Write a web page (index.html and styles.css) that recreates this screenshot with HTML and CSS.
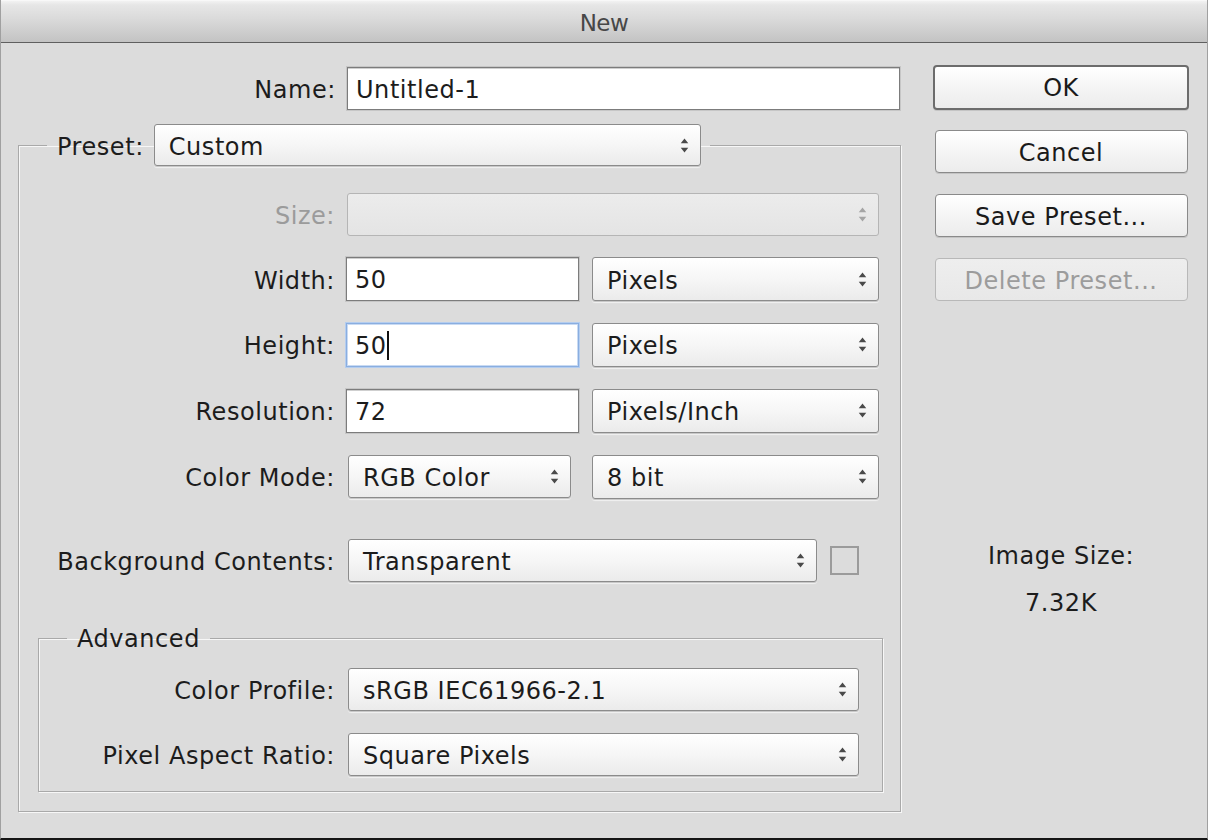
FILE: index.html
```html
<!DOCTYPE html>
<html>
<head>
<meta charset="utf-8">
<title>New</title>
<link rel="stylesheet" href="styles.css">
</head>
<body>
<div class="window">
  <div class="titlebar">New</div>
  <div class="content">
    <div class="left">
      <div class="row name-row">
        <label class="lbl lbl-main">Name:</label>
        <div class="input w-name">Untitled-1</div>
      </div>

      <fieldset class="group main-group">
        <legend class="legend-main">
          <span class="lbl">Preset:</span>
          <div class="select w-preset"><span>Custom</span><svg class="arr" viewBox="0 0 8 14"><path d="M4 0.5 L7.5 5 L0.5 5 Z M0.5 9 L7.5 9 L4 13.5 Z"/></svg></div>
        </legend>

        <div class="row r-size">
          <label class="lbl lbl-main disabled">Size:</label>
          <div class="select select-disabled w-size"><span></span><svg class="arr" viewBox="0 0 8 14"><path d="M4 0.5 L7.5 5 L0.5 5 Z M0.5 9 L7.5 9 L4 13.5 Z"/></svg></div>
        </div>

        <div class="row r-width">
          <label class="lbl lbl-main">Width:</label>
          <div class="input w-num">50</div>
          <div class="select w-unit"><span>Pixels</span><svg class="arr" viewBox="0 0 8 14"><path d="M4 0.5 L7.5 5 L0.5 5 Z M0.5 9 L7.5 9 L4 13.5 Z"/></svg></div>
        </div>

        <div class="row r-height">
          <label class="lbl lbl-main">Height:</label>
          <div class="input w-num focused">50<span class="caret"></span></div>
          <div class="select w-unit"><span>Pixels</span><svg class="arr" viewBox="0 0 8 14"><path d="M4 0.5 L7.5 5 L0.5 5 Z M0.5 9 L7.5 9 L4 13.5 Z"/></svg></div>
        </div>

        <div class="row r-res">
          <label class="lbl lbl-main">Resolution:</label>
          <div class="input w-num">72</div>
          <div class="select w-unit"><span>Pixels/Inch</span><svg class="arr" viewBox="0 0 8 14"><path d="M4 0.5 L7.5 5 L0.5 5 Z M0.5 9 L7.5 9 L4 13.5 Z"/></svg></div>
        </div>

        <div class="row r-mode">
          <label class="lbl lbl-main">Color Mode:</label>
          <div class="select sel-gap w-mode"><span>RGB Color</span><svg class="arr" viewBox="0 0 8 14"><path d="M4 0.5 L7.5 5 L0.5 5 Z M0.5 9 L7.5 9 L4 13.5 Z"/></svg></div>
          <div class="select w-unit"><span>8 bit</span><svg class="arr" viewBox="0 0 8 14"><path d="M4 0.5 L7.5 5 L0.5 5 Z M0.5 9 L7.5 9 L4 13.5 Z"/></svg></div>
        </div>

        <div class="row r-bg">
          <label class="lbl lbl-main">Background Contents:</label>
          <div class="select sel-gap w-bg"><span>Transparent</span><svg class="arr" viewBox="0 0 8 14"><path d="M4 0.5 L7.5 5 L0.5 5 Z M0.5 9 L7.5 9 L4 13.5 Z"/></svg></div>
          <div class="swatch"></div>
        </div>

        <fieldset class="group adv-group">
          <legend class="legend-adv">Advanced</legend>
          <div class="row r-profile">
            <label class="lbl lbl-adv">Color Profile:</label>
            <div class="select sel-gap w-adv"><span>sRGB IEC61966-2.1</span><svg class="arr" viewBox="0 0 8 14"><path d="M4 0.5 L7.5 5 L0.5 5 Z M0.5 9 L7.5 9 L4 13.5 Z"/></svg></div>
          </div>
          <div class="row r-par">
            <label class="lbl lbl-adv">Pixel Aspect Ratio:</label>
            <div class="select sel-gap w-adv"><span>Square Pixels</span><svg class="arr" viewBox="0 0 8 14"><path d="M4 0.5 L7.5 5 L0.5 5 Z M0.5 9 L7.5 9 L4 13.5 Z"/></svg></div>
          </div>
        </fieldset>
      </fieldset>
    </div>

    <div class="right">
      <div class="btn btn-default">OK</div>
      <div class="btn">Cancel</div>
      <div class="btn">Save Preset...</div>
      <div class="btn btn-disabled">Delete Preset...</div>
      <div class="imgsize">
        <div class="imgsize-label">Image Size:</div>
        <div class="imgsize-value">7.32K</div>
      </div>
    </div>
  </div>
</div>
</body>
</html>
```

FILE: styles.css
```css
* { box-sizing: border-box; }

html, body {
  margin: 0;
  padding: 0;
  background: #dcdcdc;
}

body {
  font-family: "DejaVu Sans", "Liberation Sans", sans-serif;
  font-size: 24px;
  letter-spacing: 0.55px;
  color: #1c1c1c;
}

.window {
  width: 1208px;
  height: 840px;
  background: #dcdcdc;
  border-left: 1px solid #a0a0a0;
  border-right: 1px solid #a0a0a0;
  border-bottom: 2px solid #151515;
  display: flex;
  flex-direction: column;
  overflow: hidden;
}

.titlebar {
  height: 43px;
  flex: none;
  text-align: center;
  line-height: 44px;
  color: #474747;
  font-size: 23px;
  letter-spacing: -0.5px;
  background: linear-gradient(#f2f2f2 0px, #e6e6e6 4px, #d8d8d8 20px, #c2c2c2 42px);
  border-top: 1px solid #f8f8f8;
  border-bottom: 1px solid #5f5f5f;
}

.content {
  display: flex;
  flex: 1;
}

.left {
  width: 930px;
  padding-left: 17px;
  flex: none;
}

.row {
  display: flex;
  align-items: center;
}

.lbl {
  white-space: nowrap;
  flex: none;
  padding-top: 3px;
}

.lbl-main {
  width: 316px;
  text-align: right;
  margin-right: 11px;
}

.lbl-adv {
  width: 296px;
  text-align: right;
  margin-right: 11px;
}

.disabled { color: #9b9b9b; }

.name-row {
  margin-top: 24px;
  height: 43px;
}

.name-row .lbl-main {
  width: 318px;
}

.input {
  height: 44px;
  background: #fff;
  border: 1px solid #7c7c7c;
  box-shadow: 0 0 0 1px #c6c6c6, inset 0 1px 0 #cfcfcf;
  padding: 3px 0 0 8px;
  line-height: 39px;
  white-space: nowrap;
  flex: none;
}

.input.focused {
  border: 1px solid #8aaee0;
  box-shadow: 0 0 0 1px #b4cdef, inset 0 0 0 1px #c8daf3;
}

.caret {
  display: inline-block;
  width: 2px;
  height: 29px;
  background: #111;
  vertical-align: -6px;
  margin-left: 0;
}

.w-name { width: 553px; height: 43px; }
.w-num { width: 233px; margin-right: 13px; }

.select {
  height: 43px;
  background: linear-gradient(#ffffff, #f6f6f6 50%, #ebebeb);
  border: 1px solid #8b8b8b;
  border-radius: 3px;
  box-shadow: 0 1px 0 #c8c8c8, 0 2px 1px rgba(255,255,255,0.6);
  display: flex;
  align-items: center;
  justify-content: space-between;
  padding: 0 11px 0 14px;
  white-space: nowrap;
  flex: none;
}

.select span {
  padding-top: 3px;
}

.select .arr {
  width: 9px;
  height: 15px;
  fill: #4a4a4a;
}

.select-disabled {
  border-color: #b5b5b5;
  background: linear-gradient(#ececec, #e4e4e4);
  box-shadow: none;
}

.select-disabled .arr { fill: #a5a5a5; }

.sel-gap { margin-left: 2px; }

.w-preset { width: 547px; height: 42px; }
.w-size { width: 532px; margin-left: 1px; }
.w-unit { width: 287px; height: 44px; }
.w-mode { width: 223px; margin-right: 21px; }
.w-bg { width: 469px; margin-right: 13px; }
.w-adv { width: 511px; }

.swatch {
  width: 29px;
  height: 29px;
  border: 2px solid #9b9b9b;
  background: #dcdcdc;
}

.group {
  margin: 0;
  padding: 0;
  min-width: 0;
  border: 1px solid #a9a9a9;
  box-shadow: inset 1px 1px 0 #f7f7f7, 1px 1px 0 #f7f7f7;
}

.main-group {
  width: 883px;
  margin-top: 14px;
  padding-bottom: 19px;
}

.legend-main {
  margin-left: 28px;
  padding: 0 9px 0 10px;
  display: flex;
  align-items: center;
  height: 42px;
}

.legend-main .lbl {
  margin-right: 10px;
}

.r-size { margin-top: 27px; height: 43px; }
.r-width { margin-top: 21px; height: 44px; }
.r-height { margin-top: 21px; height: 45px; }
.r-res { margin-top: 21px; height: 45px; }
.r-mode { margin-top: 22px; height: 43px; }
.r-bg { margin-top: 41px; height: 43px; }

.adv-group {
  width: 845px;
  margin-left: 19px;
  margin-top: 40px;
  padding-bottom: 15px;
}

.legend-adv {
  margin-left: 28px;
  padding: 2px 10px 0;
  line-height: 30px;
}

.r-profile { margin-top: 14px; height: 43px; }
.r-par { margin-top: 22px; height: 43px; }

.right {
  flex: none;
  width: 256px;
  margin-left: 2px;
  padding-top: 22px;
  display: flex;
  flex-direction: column;
  align-items: center;
}

.btn {
  width: 253px;
  height: 43px;
  margin-top: 21px;
  border: 1px solid #8a8a8a;
  border-radius: 4px;
  background: linear-gradient(#ffffff, #f3f3f3 60%, #ececec);
  box-shadow: 0 1px 0 #c4c4c4;
  text-align: center;
  line-height: 41px;
  padding-top: 2px;
  color: #1a1a1a;
}

.btn-default {
  width: 256px;
  height: 45px;
  margin-top: 0;
  border: 2px solid #6c6c6c;
  line-height: 39px;
  padding-top: 2px;
  margin-bottom: -1px;
}

.btn-disabled {
  color: #9c9c9c;
  border-color: #b8b8b8;
  background: linear-gradient(#eeeeee, #e8e8e8);
  box-shadow: none;
}

.imgsize {
  margin-top: 241px;
  text-align: center;
}

.imgsize-value {
  margin-top: 19px;
}
```
